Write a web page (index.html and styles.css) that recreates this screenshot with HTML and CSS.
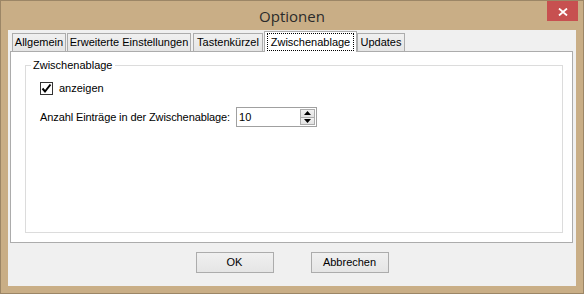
FILE: index.html
```html
<!DOCTYPE html>
<html lang="de">
<head>
<meta charset="utf-8">
<title>Optionen</title>
<link rel="stylesheet" href="styles.css">
</head>
<body>
<div class="window">
  <div class="titlebar">
    <span class="title">Optionen</span>
    <div class="close">
      <svg width="10" height="8" viewBox="0 0 10 8"><path d="M1 0.5 L9 7.5 M9 0.5 L1 7.5" stroke="#fff" stroke-width="1.8" fill="none"/></svg>
    </div>
  </div>
  <div class="client">
    <div class="tabs">
      <div class="tab t-allg">Allgemein</div>
      <div class="tab t-erw">Erweiterte Einstellungen</div>
      <div class="tab t-tast">Tastenkürzel</div>
      <div class="tab t-zw active"><span class="focus">Zwischenablage</span></div>
      <div class="tab t-upd">Updates</div>
    </div>
    <div class="page">
      <fieldset class="group">
        <legend>Zwischenablage</legend>
        <div class="group-body">
          <label class="check">
            <span class="box"><svg width="11" height="11" viewBox="0 0 11 11"><path d="M1.5 5.5 L4 8.5 L9.5 1.5" stroke="#000" stroke-width="2" fill="none"/></svg></span>
            <span>anzeigen</span>
          </label>
          <div class="row">
            <span class="label">Anzahl Einträge in der Zwischenablage:</span>
            <div class="spin">
              <span class="val">10</span>
              <div class="arrows">
                <div class="arrow"><svg width="7" height="4" viewBox="0 0 7 4"><path d="M0 4 L3.5 0 L7 4 Z" fill="#000"/></svg></div>
                <div class="arrow"><svg width="7" height="4" viewBox="0 0 7 4"><path d="M0 0 L7 0 L3.5 4 Z" fill="#000"/></svg></div>
              </div>
            </div>
          </div>
        </div>
      </fieldset>
    </div>
    <div class="buttons">
      <div class="btn">OK</div>
      <div class="btn">Abbrechen</div>
    </div>
  </div>
</div>
</body>
</html>
```

FILE: styles.css
```css
* { box-sizing: border-box; }
html, body { margin: 0; padding: 0; }
body {
  width: 584px;
  height: 294px;
  font-family: "Liberation Sans", Arial, sans-serif;
  font-size: 11px;
  color: #000;
  background: #c9ae86;
}
.window {
  width: 584px;
  height: 294px;
  border: 1px solid #9c8666;
  background: #c9ae86;
  display: flex;
  flex-direction: column;
}
.titlebar {
  height: 29px;
  display: grid;
  grid-template-columns: 1fr auto 1fr;
  align-items: start;
}
.title {
  grid-column: 2;
  font-family: "Open Sans", "Noto Sans", sans-serif;
  font-size: 15px;
  line-height: 20px;
  margin-top: 5px;
  color: #2b2b2b;
}
.close {
  grid-column: 3;
  justify-self: end;
  width: 31px;
  height: 20px;
  margin-right: 5px;
  background: #c75050;
  display: flex;
  align-items: center;
  justify-content: center;
  padding-top: 1px;
}
.close svg { display: block; }
.client {
  margin: 0 7px 7px 7px;
  flex: 1;
  background: #f0f0f0;
  padding: 1px 3px 0 2px;
  display: flex;
  flex-direction: column;
}
.tabs {
  height: 20px;
  display: flex;
  align-items: flex-start;
}
.tab {
  height: 18px;
  margin-top: 2px;
  border: 1px solid #acacac;
  border-bottom: none;
  background: linear-gradient(#f0f0f0, #e5e5e5);
  text-align: center;
  line-height: 17px;
  white-space: nowrap;
}
.t-allg { width: 54px; margin-left: 2px; }
.t-erw { width: 124px; margin-left: 1px; }
.t-tast { width: 70px; margin-left: 2px; }
.t-zw { width: 93px; margin-left: 1px; }
.t-upd { width: 48px; margin-left: 0; }
.tab.active {
  height: 21px;
  margin-top: 0;
  background: #fff;
  position: relative;
  z-index: 1;
  padding: 1px 2px 0 2px;
  line-height: 16px;
}
.focus {
  display: block;
  height: 18px;
  border: 1px dotted #000;
  line-height: 16px;
}
.page {
  height: 192px;
  border: 1px solid #acacac;
  background: #fff;
  padding: 7px 0 0 14px;
}
.group {
  margin: 0;
  width: 538px;
  height: 174px;
  border: 1px solid #dcdcdc;
  padding: 0 0 0 5px;
}
.group legend {
  padding: 0 2px;
  line-height: 13px;
}
.group-body {
  padding: 9px 0 0 9px;
  display: flex;
  flex-direction: column;
}
.check {
  display: flex;
  align-items: center;
  gap: 6px;
  height: 14px;
}
.box {
  width: 13px;
  height: 13px;
  border: 1px solid #333;
  background: #fff;
  display: flex;
  align-items: center;
  justify-content: center;
}
.box svg { display: block; }
.row {
  margin-top: 12px;
  display: flex;
  align-items: center;
  gap: 6px;
}
.label { letter-spacing: -0.1px; }
.spin {
  width: 81px;
  height: 20px;
  border: 1px solid #a0a0a0;
  background: #fff;
  display: flex;
  align-items: center;
  justify-content: space-between;
  padding: 0 1px 0 2px;
}
.val { line-height: 14px; }
.arrows {
  width: 15px;
  height: 16px;
  display: flex;
  flex-direction: column;
}
.arrow {
  flex: 1;
  border: 1px solid #acacac;
  background: linear-gradient(#f2f2f2, #e3e3e3);
  display: flex;
  align-items: center;
  justify-content: center;
}
.arrow + .arrow { border-top: none; }
.arrow svg { display: block; }
.buttons {
  margin-top: 9px;
  display: flex;
  justify-content: center;
  gap: 37px;
  padding-left: 1px;
}
.btn {
  width: 78px;
  height: 21px;
  border: 1px solid #acacac;
  background: linear-gradient(#f0f0f0, #e5e5e5);
  text-align: center;
  line-height: 19px;
}
```
